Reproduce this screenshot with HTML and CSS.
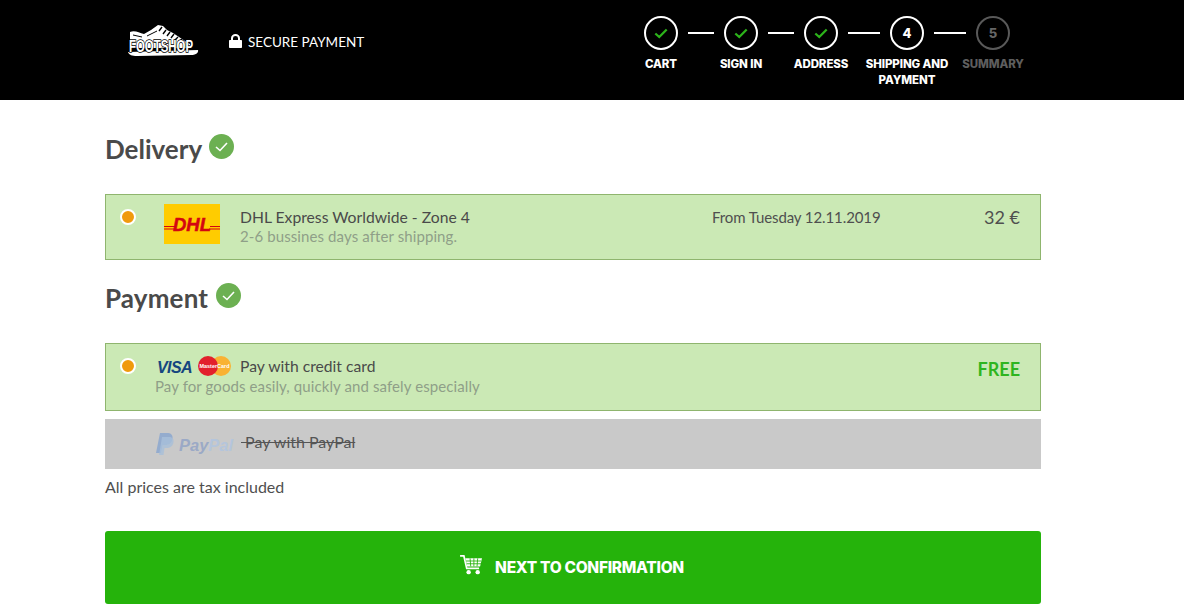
FILE: index.html
```html
<!DOCTYPE html>
<html lang="en">
<head>
<meta charset="utf-8">
<title>Footshop checkout</title>
<link rel="stylesheet" href="styles.css">
</head>
<body>
<header class="topbar">
  <svg class="logo" viewBox="0 0 72 34" width="72" height="34" aria-label="Footshop">
    <path d="M3 8 C8 6 12 9 17 10 L24 6 L31 1 L36 2 L40 6 L46 9 L52 13 L58 17 L63 20 L64 24 L3 24 Z" fill="#fff"/>
    <path d="M35 3 l-3 4 M39 6 l-3 4 M43 8 l-3 4 M47 10 l-3 4 M51 13 l-3 3 M55 15 l-3 3" stroke="#000" stroke-width="1.400" fill="none"/>
    <path d="M20 12 L30 7 M6 11 l9 2" stroke="#000" stroke-width="1" fill="none"/>
    <path d="M1 28 L71 26 C72 29 68 31 64 31 L10 32 C5 32 2 31 1 28 Z" fill="#fff"/>
    <text class="logo-text" x="2" y="19" transform="scale(1 1.450)" textLength="64" lengthAdjust="spacingAndGlyphs">FOOTSHOP</text>
  </svg>
  <div class="secure">
    <svg class="lock" viewBox="0 0 13 14" width="13" height="14"><path d="M2 6V4.200a4.500 4.200 0 0 1 9 0V6h1.200a.8.8 0 0 1 .8.8v6.400a.8.8 0 0 1-.8.8H.8a.8.8 0 0 1-.8-.8V6.800A.8.8 0 0 1 .8 6zM4 6h5V4.200a2.500 2.300 0 0 0-5 0z" fill="#fff" fill-rule="evenodd"/></svg>
    <span>SECURE PAYMENT</span>
  </div>
  <nav class="steps">
    <div class="step-icons">
      <span class="circle"><svg viewBox="0 0 16 12" width="14" height="11"><path d="M1.500 6 L6 10 L14.500 1.500" class="tick"/></svg></span>
      <span class="line"></span>
      <span class="circle"><svg viewBox="0 0 16 12" width="14" height="11"><path d="M1.500 6 L6 10 L14.500 1.500" class="tick"/></svg></span>
      <span class="line"></span>
      <span class="circle"><svg viewBox="0 0 16 12" width="14" height="11"><path d="M1.500 6 L6 10 L14.500 1.500" class="tick"/></svg></span>
      <span class="line line-wide"></span>
      <span class="circle">4</span>
      <span class="line line-wide"></span>
      <span class="circle circle-off">5</span>
    </div>
    <div class="step-labels">
      <span class="label">CART</span>
      <span class="label">SIGN IN</span>
      <span class="label">ADDRESS</span>
      <span class="label label-wide">SHIPPING AND PAYMENT</span>
      <span class="label label-off">SUMMARY</span>
    </div>
  </nav>
</header>

<main class="content">
  <h2 class="heading heading-delivery">Delivery
    <svg class="ok" viewBox="0 0 25 25" width="25" height="25"><circle cx="12.500" cy="12.500" r="12.500" fill="#6cb052"/><path d="M7 13 L11 16.500 L18 9" fill="none" stroke="#fff" stroke-width="1.600"/></svg>
  </h2>
  <section class="option option-dhl">
    <span class="radio"></span>
    <svg class="dhl" viewBox="0 0 56 40" width="56" height="40">
      <rect width="56" height="40" fill="#fc0"/>
      <path d="M0 22h11v1H0zM0 24.500h10v1H0zM46 22h10v1H46zM45 24.500h11v1H45z" fill="#d40511"/>
      <text class="dhl-text" x="9" y="27" textLength="38" lengthAdjust="spacingAndGlyphs">DHL</text>
    </svg>
    <div class="info info-dhl">
      <div class="title">DHL Express Worldwide - Zone 4</div>
      <div class="sub">2-6 bussines days after shipping.</div>
    </div>
    <div class="date">From Tuesday 12.11.2019</div>
    <div class="price">32 €</div>
  </section>

  <h2 class="heading heading-payment">Payment
    <svg class="ok" viewBox="0 0 25 25" width="25" height="25"><circle cx="12.500" cy="12.500" r="12.500" fill="#6cb052"/><path d="M7 13 L11 16.500 L18 9" fill="none" stroke="#fff" stroke-width="1.600"/></svg>
  </h2>
  <section class="option option-card">
    <span class="radio"></span>
    <div class="info info-card">
      <div class="title-line">
        <span class="visa">VISA</span>
        <svg class="mc" viewBox="0 0 33 20" width="33" height="20">
          <circle cx="23" cy="10" r="10" fill="#f9b233"/>
          <circle cx="10" cy="10" r="10" fill="#e2202c"/>
          <text class="mc-text" x="16.500" y="12" text-anchor="middle" textLength="30" lengthAdjust="spacingAndGlyphs">MasterCard</text>
        </svg>
        <span class="title">Pay with credit card</span>
      </div>
      <div class="sub">Pay for goods easily, quickly and safely especially</div>
    </div>
    <div class="free">FREE</div>
  </section>
  <section class="option-off">
    <svg class="pp-mark" viewBox="0 0 18 22" width="18" height="22">
      <path d="M4 0h7c4 0 6 2 5.500 5.500C16 10 13 12 9 12H6.500L5 20H0z" fill="#8fa9cf"/>
      <path d="M6 4h7c3 0 5 2 4.500 5C17 13 14 15 10.500 15H8.500L7.500 22H3z" fill="#a5bfdc" opacity=".8"/>
    </svg>
    <span class="pp-name"><span class="pp-a">Pay</span><span class="pp-b">Pal</span></span>
    <span class="struck">&nbsp;Pay with PayPal</span>
  </section>
  <p class="tax">All prices are tax included</p>
  <button class="cta" type="button">
    <svg class="cart" viewBox="0 0 24 21" width="23" height="20">
      <path d="M0 1h4l3 13h13" fill="none" stroke="#fff" stroke-width="1.800"/>
      <path d="M5.500 3.500H23l-2 8.500H7.500z" fill="#fff"/>
      <path d="M6 6.300h16M7 9.200h15M10.500 3.500l.7 8.500M14.500 3.500v8.500M18.500 3.500l-.7 8.500" stroke="#25b30b" stroke-width=".9"/>
      <circle cx="9" cy="18" r="2.300" fill="#fff"/><circle cx="18.500" cy="18" r="2.300" fill="#fff"/>
    </svg>
    <span>NEXT TO CONFIRMATION</span>
  </button>
</main>
</body>
</html>
```
FILE: styles.css
```css
* { box-sizing: border-box; }
html, body { margin: 0; padding: 0; }
body {
  width: 1184px;
  height: 608px;
  overflow: hidden;
  background: #fff;
  color: #4a4a4a;
  font-family: "Lato", "Liberation Sans", sans-serif;
}

.topbar {
  height: 100px;
  background: #000;
  display: flex;
  align-items: flex-start;
  padding-left: 127px;
  color: #fff;
}
.logo { margin-top: 24px; flex: none; }
.logo-text { font: 700 12px "Liberation Sans", sans-serif; fill: #fff; stroke: #000; stroke-width: 1.200px; paint-order: stroke; }
.secure {
  margin-left: 30px;
  margin-top: 33px;
  display: flex;
  align-items: center;
  gap: 6px;
  font: 400 13.500px/18px "Lato", sans-serif;
  width: 392px;
  flex: none;
}
.lock { flex: none; margin-top: -2px; }

.steps { width: 412px; flex: none; padding-top: 16px; }
.step-icons { display: flex; align-items: center; padding-left: 23px; gap: 10px; }
.circle {
  width: 34px;
  height: 34px;
  flex: none;
  border: 2px solid #fff;
  border-radius: 50%;
  display: flex;
  align-items: center;
  justify-content: center;
  font: 800 13px "Inter", sans-serif;
  color: #fff;
}
.circle-off { border-color: #595959; color: #666; }
.tick { fill: none; stroke: #2cb31a; stroke-width: 2.600; }
.line { width: 26px; height: 2px; background: #fff; flex: none; }
.line-wide { width: 32px; }
.step-labels { display: flex; margin-top: 6px; }
.label {
  width: 80px;
  flex: none;
  text-align: center;
  font: 800 11.500px/16px "Inter", sans-serif;
  letter-spacing: -.1px;
  color: #fff;
}
.label-wide { width: 92px; }
.label-off { color: #5e5e5e; }

.content { width: 936px; margin-left: 105px; }
.heading {
  margin: 0;
  display: flex;
  align-items: flex-start;
  gap: 7px;
  font: 700 26px/32px "Lato", sans-serif;
  color: #4a4a4a;
  height: 32px;
}
.heading-delivery { margin-top: 33px; }
.heading-payment { margin-top: 22px; gap: 8px; letter-spacing: .15px; }
.ok { flex: none; margin-top: 1px; }

.option {
  background: #cbe9b5;
  border: 1px solid #8fb56e;
  display: flex;
  align-items: flex-start;
  padding-left: 14px;
  padding-right: 20px;
  font-size: 15px;
  line-height: 19px;
  margin-top: 29px;
}
.option-dhl { height: 66px; padding-top: 9px; }
.option-card { height: 68px; padding-top: 13px; }
.radio {
  width: 16px;
  height: 16px;
  flex: none;
  border-radius: 50%;
  background: #f09a0d;
  border: 2px solid #fff;
  margin-top: 5px;
}
.option-card .radio { margin-top: 1px; }
.dhl { flex: none; margin-left: 28px; }
.info-dhl { margin-left: 20px; width: 472px; flex: none; padding-top: 4px; }
.info-card { margin-left: 19px; }
.title { color: #4a4a4a; font-size: 15.700px; }
.sub { color: #8f9f88; letter-spacing: .1px; }
.date { color: #4f4f4f; padding-top: 4px; letter-spacing: -.1px; }
.price { margin-left: auto; font-size: 18px; padding-top: 4px; color: #4f4f4f; }
.title-line { display: flex; align-items: center; height: 20px; margin-top: -1px; margin-bottom: 1px; }
.visa {
  font: italic 900 16px/20px "Liberation Sans", sans-serif;
  color: #15467f;
  margin-left: 2px;
  margin-top: 3px;
  width: 41px;
  letter-spacing: -.6px;
}
.mc { flex: none; }
.mc-text { font: 700 5.500px "Liberation Sans", sans-serif; fill: #fff; }
.dhl-text { font: italic 700 18px "Liberation Sans", sans-serif; fill: #d40511; stroke: #d40511; stroke-width: .5px; }
.title-line .title { margin-left: 9px; }
.free { margin-left: auto; color: #2eb520; font-weight: 700; font-size: 18px; padding-top: 3px; }

.option-off {
  height: 50px;
  margin-top: 8px;
  background: #c9c9c9;
  display: flex;
  align-items: center;
  padding-left: 51px;
  font-size: 16px;
}
.pp-mark { flex: none; opacity: .9; }
.pp-name {
  margin-left: 5px;
  width: 60px;
  flex: none;
  font: italic 700 16.500px/20px "Liberation Sans", sans-serif;
  padding-top: 2px;
}
.pp-a { color: #9ba9c6; }
.pp-b { color: #b4c5dc; }
.struck { text-decoration: line-through; color: #555; margin-left: 2px; margin-bottom: 5px; }
.tax { margin: 8px 0 0; font-size: 16px; line-height: 20px; color: #4f4f4f; }
.cta {
  display: flex;
  align-items: center;
  justify-content: center;
  gap: 12px;
  width: 100%;
  height: 73px;
  margin-top: 34px;
  border: 0;
  border-radius: 3px;
  background: #25b30b;
  color: #fff;
  font: 800 15.500px "Inter", sans-serif;
  letter-spacing: -.3px;
  padding: 0 2px 0 0;
}
.cart { flex: none; margin-top: -6px; }
```
